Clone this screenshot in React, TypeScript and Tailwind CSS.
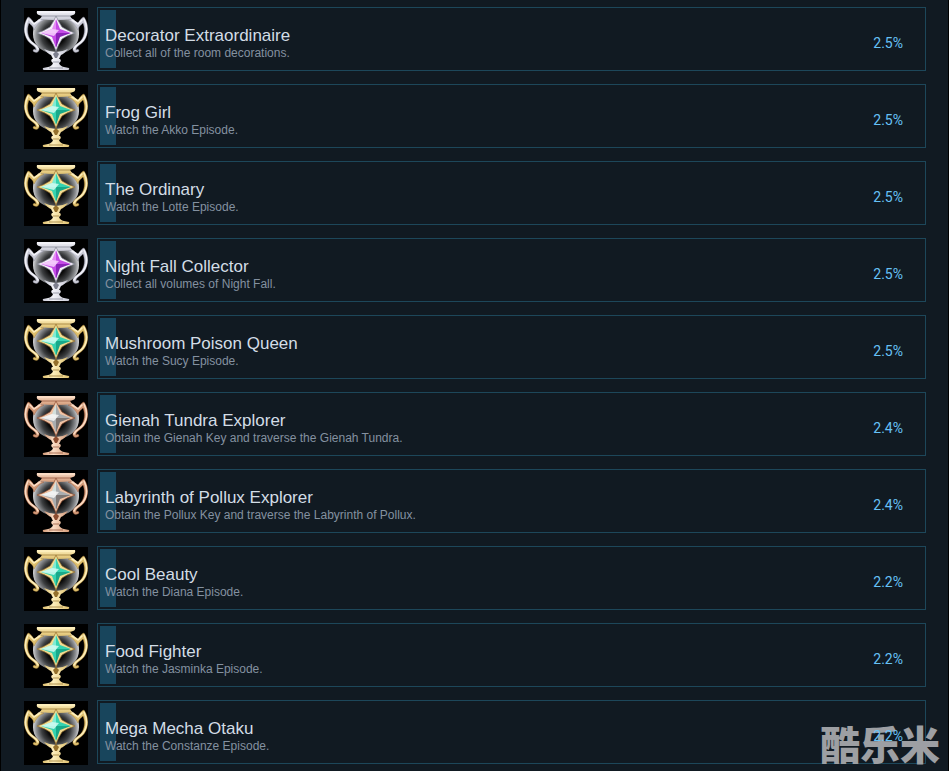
import React from "react";

type Metal = "silver" | "gold" | "bronze";

interface Achievement {
  title: string;
  description: string;
  percent: number;
  metal: Metal;
}

const achievements: Achievement[] = [
  { title: "Decorator Extraordinaire", description: "Collect all of the room decorations.", percent: 2.5, metal: "silver" },
  { title: "Frog Girl", description: "Watch the Akko Episode.", percent: 2.5, metal: "gold" },
  { title: "The Ordinary", description: "Watch the Lotte Episode.", percent: 2.5, metal: "gold" },
  { title: "Night Fall Collector", description: "Collect all volumes of Night Fall.", percent: 2.5, metal: "silver" },
  { title: "Mushroom Poison Queen", description: "Watch the Sucy Episode.", percent: 2.5, metal: "gold" },
  { title: "Gienah Tundra Explorer", description: "Obtain the Gienah Key and traverse the Gienah Tundra.", percent: 2.4, metal: "bronze" },
  { title: "Labyrinth of Pollux Explorer", description: "Obtain the Pollux Key and traverse the Labyrinth of Pollux.", percent: 2.4, metal: "bronze" },
  { title: "Cool Beauty", description: "Watch the Diana Episode.", percent: 2.2, metal: "gold" },
  { title: "Food Fighter", description: "Watch the Jasminka Episode.", percent: 2.2, metal: "gold" },
  { title: "Mega Mecha Otaku", description: "Watch the Constanze Episode.", percent: 2.2, metal: "gold" },
];

interface Palette {
  light: string;
  mid: string;
  dark: string;
  outline: string;
  gem: [string, string, string, string];
}

const palettes: Record<Metal, Palette> = {
  silver: { light: "#f2f2f8", mid: "#c9cad6", dark: "#7d7f8e", outline: "#f6f2fa", gem: ["#f6d4fb", "#c44be6", "#8a22b8", "#e58af5"] },
  gold: { light: "#fdeebb", mid: "#dfc06e", dark: "#94702c", outline: "#f3dc93", gem: ["#d2fbf2", "#35d3b0", "#18a98a", "#7fecd4"] },
  bronze: { light: "#fbdcc4", mid: "#d39a78", dark: "#8c4c30", outline: "#f0c3a4", gem: ["#f6f6f6", "#a9adb0", "#7c7674", "#d3dfdc"] },
};

function Trophy({ metal, id }: { metal: Metal; id: string }) {
  const p = palettes[metal];
  const glass = `glass-${id}`;
  const shine = `shine-${id}`;
  const lip = `lip-${id}`;
  return (
    <svg viewBox="0 0 64 64" className="mt-px size-16 shrink-0 bg-black" role="img" aria-label={`${metal} trophy`}>
      <defs>
        <radialGradient id={glass} cx="32" cy="28" r="24" gradientUnits="userSpaceOnUse">
          <stop offset="0.35" stopColor="#0a0a0a" />
          <stop offset="0.6" stopColor="#3c3e40" />
          <stop offset="0.82" stopColor="#8e9093" />
          <stop offset="1" stopColor="#e8e8ea" />
        </radialGradient>
        <linearGradient id={shine} x1="0" y1="0" x2="1" y2="0">
          <stop offset="0" stopColor={p.mid} />
          <stop offset="0.4" stopColor={p.light} />
          <stop offset="1" stopColor={p.mid} />
        </linearGradient>
        <linearGradient id={lip} x1="0" y1="0" x2="0" y2="1">
          <stop offset="0" stopColor={p.light} />
          <stop offset="1" stopColor={p.mid} />
        </linearGradient>
      </defs>

      <path d="M17 10C11 13 9 19 9 26C9 36 16 43 28 46H36C48 43 55 36 55 26C55 19 53 13 47 10Z" fill={`url(#${glass})`} />

      <g fill={p.mid} stroke={p.dark} strokeWidth="0.4">
        <path d="M4 9C6 9 8 12 10 15L16 11L20 12C15 14 12 18 10 22C9 18 7 17 5 15C3 20 3 26 6 31C8 35 13 36 15 40C16 44 12 46 9 43C9 41 11 41 12 42C12 38 7 37 4 33C-1 26-1 16 4 9Z" />
        <path d="M60 9C58 9 56 12 54 15L48 11L44 12C49 14 52 18 54 22C55 18 57 17 59 15C61 20 61 26 58 31C56 35 51 36 49 40C48 44 52 46 55 43C55 41 53 41 52 42C52 38 57 37 60 33C65 26 65 16 60 9Z" />
      </g>
      <g fill="none" stroke={p.light} strokeWidth="1.6" strokeLinecap="round">
        <path d="M4 11C1 17 0 25 5 32C8 36 13 37 14 41" />
        <path d="M60 11C63 17 64 25 59 32C56 36 51 37 50 41" />
        <path d="M6 12L10 16L16 12M58 12L54 16L48 12" />
      </g>

      <path d="M13 3H51Q52 6 49 7L46 8L48 11Q32 13 16 11L18 8L15 7Q12 6 13 3Z" fill={`url(#${lip})`} />
      <path d="M13 3H51V5H13Z" fill={p.light} />
      <path d="M17 8H47" stroke={p.dark} strokeWidth="0.7" />

      <path d="M20 41Q32 47 44 41Q40 46 37 47L35 51H29L27 47Q24 46 20 41Z" fill={`url(#${shine})`} />
      <path d="M29 46L32 43L35 46L33 50H31Z" fill={p.dark} />
      <path d="M28 51H36Q38 53 35 55Q36 58 40 59L45 60Q46 62 43 62H21Q18 62 19 60L24 59Q28 58 29 55Q26 53 28 51Z" fill={`url(#${shine})`} />
      <path d="M29 54H35M25 60H39" stroke={p.dark} strokeWidth="0.7" />

      <path d="M32 8Q34 13 38 19Q44 23 51 25Q44 27 38 31Q34 37 32 43Q30 37 26 31Q20 27 13 25Q20 23 26 19Q30 13 32 8Z" fill={p.outline} stroke={p.dark} strokeWidth="0.7" />
      <path d="M32 11L28 21L17 25L32 25Z" fill={p.gem[3]} />
      <path d="M32 11L36 21L47 25L32 25Z" fill={p.gem[1]} />
      <path d="M32 40L28 29L17 25L32 25Z" fill={p.gem[1]} />
      <path d="M32 40L36 29L47 25L32 25Z" fill={p.gem[2]} />
      <path d="M17 25L28 21L35 22L30 28Z" fill={p.gem[0]} opacity="0.85" />
    </svg>
  );
}

function AchievementRow({ item, id }: { item: Achievement; id: string }) {
  return (
    <li className="flex h-16 gap-[9px]">
      <Trophy metal={item.metal} id={id} />
      <div className="relative flex min-w-0 flex-1 items-center justify-between border border-[#1d475a] pr-[22px] pl-[7px]">
        <div className="absolute inset-[2px]" aria-hidden="true">
          <div className="h-full bg-[#18455c]" style={{ width: `${Math.floor(item.percent)}%` }} />
        </div>
        <div className="relative min-w-0 pt-[7px]">
          <h3 className="text-[17px] leading-[21px] text-[#d3dde6]">{item.title}</h3>
          <p className="text-[12px] leading-[14px] text-[#8491a0]">{item.description}</p>
        </div>
        <span className="relative z-20 pt-2 font-[Roboto,sans-serif] text-[14px] leading-5 text-[#67c1f5]">{item.percent.toFixed(1)}%</span>
      </div>
    </li>
  );
}

export default function App() {
  return (
    <main className="relative min-h-screen border-x border-black bg-[#111a22] pt-[7px] pr-[22px] pb-[7px] pl-[23px] font-['Liberation_Sans',Arial,sans-serif]">
      <ul className="flex flex-col gap-[13px]">
        {achievements.map((item, index) => (
          <AchievementRow key={item.title} item={item} id={String(index)} />
        ))}
      </ul>
      <div className="absolute right-2 bottom-2 z-10 font-['Noto_Sans_CJK_SC',sans-serif] text-[40px] leading-10 font-black text-[#9d9fa3]">酷乐米</div>
    </main>
  );
}
